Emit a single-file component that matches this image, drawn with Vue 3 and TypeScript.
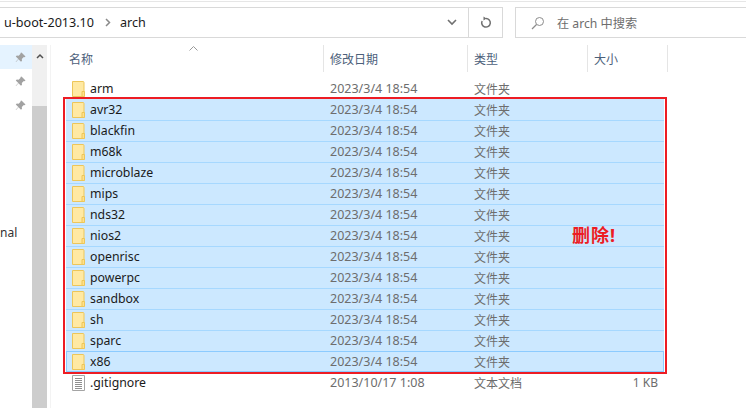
<script setup lang="ts">
const folders = ['arm', 'avr32', 'blackfin', 'm68k', 'microblaze', 'mips', 'nds32', 'nios2', 'openrisc', 'powerpc', 'sandbox', 'sh', 'sparc', 'x86']
const marked = (name: string) => name !== 'arm'
</script>

<template>
  <div class="window">
    <div class="toolbar">
      <div class="address">
        <span class="crumb">u-boot-2013.10</span>
        <svg class="crumb-sep" width="6" height="9" viewBox="0 0 6 9"><path d="M1 1l3.500 3.500L1 8" fill="none" stroke="#8a8a8a" stroke-width="1.500" /></svg>
        <span class="crumb">arch</span>
        <span class="grow" />
        <div class="drop">
          <svg width="10" height="7" viewBox="0 0 10 7"><path d="M1 1l4 4 4-4" fill="none" stroke="#707070" stroke-width="1.600" /></svg>
        </div>
        <div class="refresh">
          <svg width="12" height="13" viewBox="0 0 12 13"><path d="M6 2.500a4.300 4.300 0 1 1-3.900 2.500" fill="none" stroke="#707070" stroke-width="1.500" /><path d="M3.500 0.500L6.500 2.500 3.500 4.500z" fill="#707070" /></svg>
        </div>
      </div>
      <div class="search">
        <svg width="14" height="14" viewBox="0 0 14 14"><circle cx="8.500" cy="5.500" r="4" fill="none" stroke="#8c8c8c" /><path d="M5.500 8.500L1 13" stroke="#8c8c8c" stroke-width="1.200" /></svg>
        <span>在 arch 中搜索</span>
      </div>
    </div>

    <div class="body">
      <aside class="nav">
        <div class="pins">
          <div v-for="n in 3" :key="n" class="pin" :class="{ active: n === 1 }">
            <svg width="11" height="11" viewBox="0 0 11 11"><path d="M6.500 0.500l4 4-1 .7-.7-.2-2 2 .2 1.800-1 1L3.500 7.300 1 10l-.3-.3 2.600-2.700L0.800 4.500l1-1 1.800.2 2-2-.2-.7z" fill="#a2a2a2" /></svg>
          </div>
        </div>
        <span class="cut">nal</span>
      </aside>
      <div class="scrollbar">
        <div class="track">
          <svg width="8" height="6" viewBox="0 0 8 6"><path d="M1 5l3-3 3 3" fill="none" stroke="#505050" stroke-width="1.500" /></svg>
        </div>
        <div class="thumb" />
      </div>

      <main class="list">
        <div class="head">
          <svg class="sort" width="9" height="5" viewBox="0 0 9 5"><path d="M.5 4.500l4-4 4 4" fill="none" stroke="#9a9a9a" /></svg>
          <div class="cell col-name">名称</div>
          <div class="cell col-date">修改日期</div>
          <div class="cell col-type">类型</div>
          <div class="cell col-size">大小</div>
        </div>

        <div class="rows">
          <div v-for="name in folders" :key="name" class="row" :class="{ selected: marked(name), focused: name === 'x86' }">
            <div class="col-name name">
              <svg class="icon" width="13" height="16" viewBox="0 0 13 16">
                <path d="M.5.500h10.500a1 1 0 0 1 1 1v14H.5z" fill="#ffe9a3" stroke="#edc659" />
                <path d="M10 10.500h2.500v5H10z" fill="#ffe08a" stroke="#edc659" />
              </svg>
              <span>{{ name }}</span>
            </div>
            <div class="col-date date">2023/3/4 18:54</div>
            <div class="col-type kind">文件夹</div>
          </div>
          <div class="row">
            <div class="col-name name">
              <svg class="icon" width="13" height="16" viewBox="0 0 13 16">
                <path d="M.5.500h12v15H.5z" fill="#fff" stroke="#a4a4a4" />
                <path d="M3 3.500h7M3 5.500h7M3 7.500h7M3 9.500h7M3 11.500h7M3 13.500h7" stroke="#8f8f8f" />
              </svg>
              <span>.gitignore</span>
            </div>
            <div class="col-date date">2013/10/17 1:08</div>
            <div class="col-type kind">文本文档</div>
            <div class="col-size size">1 KB</div>
          </div>
        </div>

        <div class="mark">
          <span class="mark-label">删除!</span>
        </div>
      </main>
    </div>
  </div>
</template>

<style scoped>
.window {
  width: 746px;
  height: 408px;
  overflow: hidden;
  display: flex;
  flex-direction: column;
  background: #fff;
  font-family: "Noto Sans", "Noto Sans CJK SC", sans-serif;
  font-size: 12px;
}
.toolbar {
  height: 44px;
  box-sizing: border-box;
  margin-top: 1px;
  border-top: 1px solid #e6e6e6;
  padding-top: 5px;
  display: flex;
  gap: 12px;
  align-items: flex-start;
}
.address {
  width: 503px;
  height: 31px;
  box-sizing: border-box;
  border: 1px solid #d9d9d9;
  border-left: none;
  display: flex;
  align-items: center;
  padding-left: 4px;
  color: #1a1a1a;
}
.crumb { font-size: 12.600px; line-height: 16px; }
.crumb-sep { margin: 0 9px 0 11px; }
.grow { flex: 1; }
.drop { width: 32px; display: flex; justify-content: center; }
.refresh {
  width: 33px;
  height: 29px;
  border-left: 1px solid #d9d9d9;
  display: flex;
  align-items: center;
  justify-content: center;
}
.search {
  flex: 1;
  height: 31px;
  box-sizing: border-box;
  border: 1px solid #d9d9d9;
  border-right: none;
  display: flex;
  align-items: center;
  padding-left: 15px;
  gap: 12px;
  color: #6d6d6d;
  font-size: 12.200px;
}
.body { flex: 1; display: flex; min-height: 0; }
.nav { width: 32px; position: relative; }
.pins { display: flex; flex-direction: column; }
.pin {
  height: 24px;
  display: flex;
  align-items: center;
  justify-content: flex-end;
  padding-right: 6px;
}
.pin.active { background: #e5f3ff; }
.cut { position: absolute; left: 0; top: 179px; color: #333; line-height: 18px; }
.scrollbar {
  width: 15px;
  display: flex;
  flex-direction: column;
  background: #f0f0f0;
  border-right: 3px solid #fff;
}
.track { height: 61px; padding-top: 8px; box-sizing: border-box; display: flex; justify-content: center; align-items: flex-start; }
.thumb { flex: 1; background: #cdcdcd; }
.list {
  flex: 1;
  position: relative;
  border-left: 1px solid #f3f3f3;
  min-width: 0;
}
.head {
  height: 27px;
  display: flex;
  position: relative;
  padding-left: 16px;
  color: #4c607a;
}
.sort { position: absolute; left: 138px; top: 1px; }
.cell {
  height: 27px;
  box-sizing: border-box;
  line-height: 29px;
  border-right: 1px solid #e5e5e5;
}
.col-name { width: 257px; flex: none; padding-left: 2px; box-sizing: border-box; }
.col-date { width: 144px; flex: none; padding-left: 6px; box-sizing: border-box; }
.col-type { width: 120px; flex: none; padding-left: 6px; box-sizing: border-box; }
.col-size { width: 80px; flex: none; padding-left: 6px; box-sizing: border-box; }
.rows { padding-top: 6px; }
.row {
  height: 21px;
  width: 598px;
  margin-left: 15px;
  box-sizing: border-box;
  display: flex;
  align-items: center;
  border-top: 1px solid transparent;
  padding-bottom: 1px;
}
.row.selected { background: #cce8ff; }
.row.selected + .row.selected { border-top-color: #a6d8ff; }
.row.focused { outline: 1px solid #8ccbff; outline-offset: -1px; }
.name {
  display: flex;
  align-items: center;
  gap: 5px;
  padding-left: 6px;
  width: 258px;
  color: #1a1a1a;
  font-size: 12.300px;
}
.icon { flex: none; }
.date { font-size: 12.500px; color: #6d6d6d; }
.kind, .size { color: #6d6d6d; }
.size { width: 70px; text-align: right; padding: 0; }
.mark {
  position: absolute;
  left: 12px;
  top: 52px;
  width: 604px;
  height: 277px;
  box-sizing: border-box;
  border: 2px solid #ed1c24;
}
.mark-label {
  position: absolute;
  left: 507px;
  top: 123px;
  color: #ed1c24;
  font-size: 18px;
  font-weight: 700;
  line-height: 26px;
  letter-spacing: 1px;
}
</style>
